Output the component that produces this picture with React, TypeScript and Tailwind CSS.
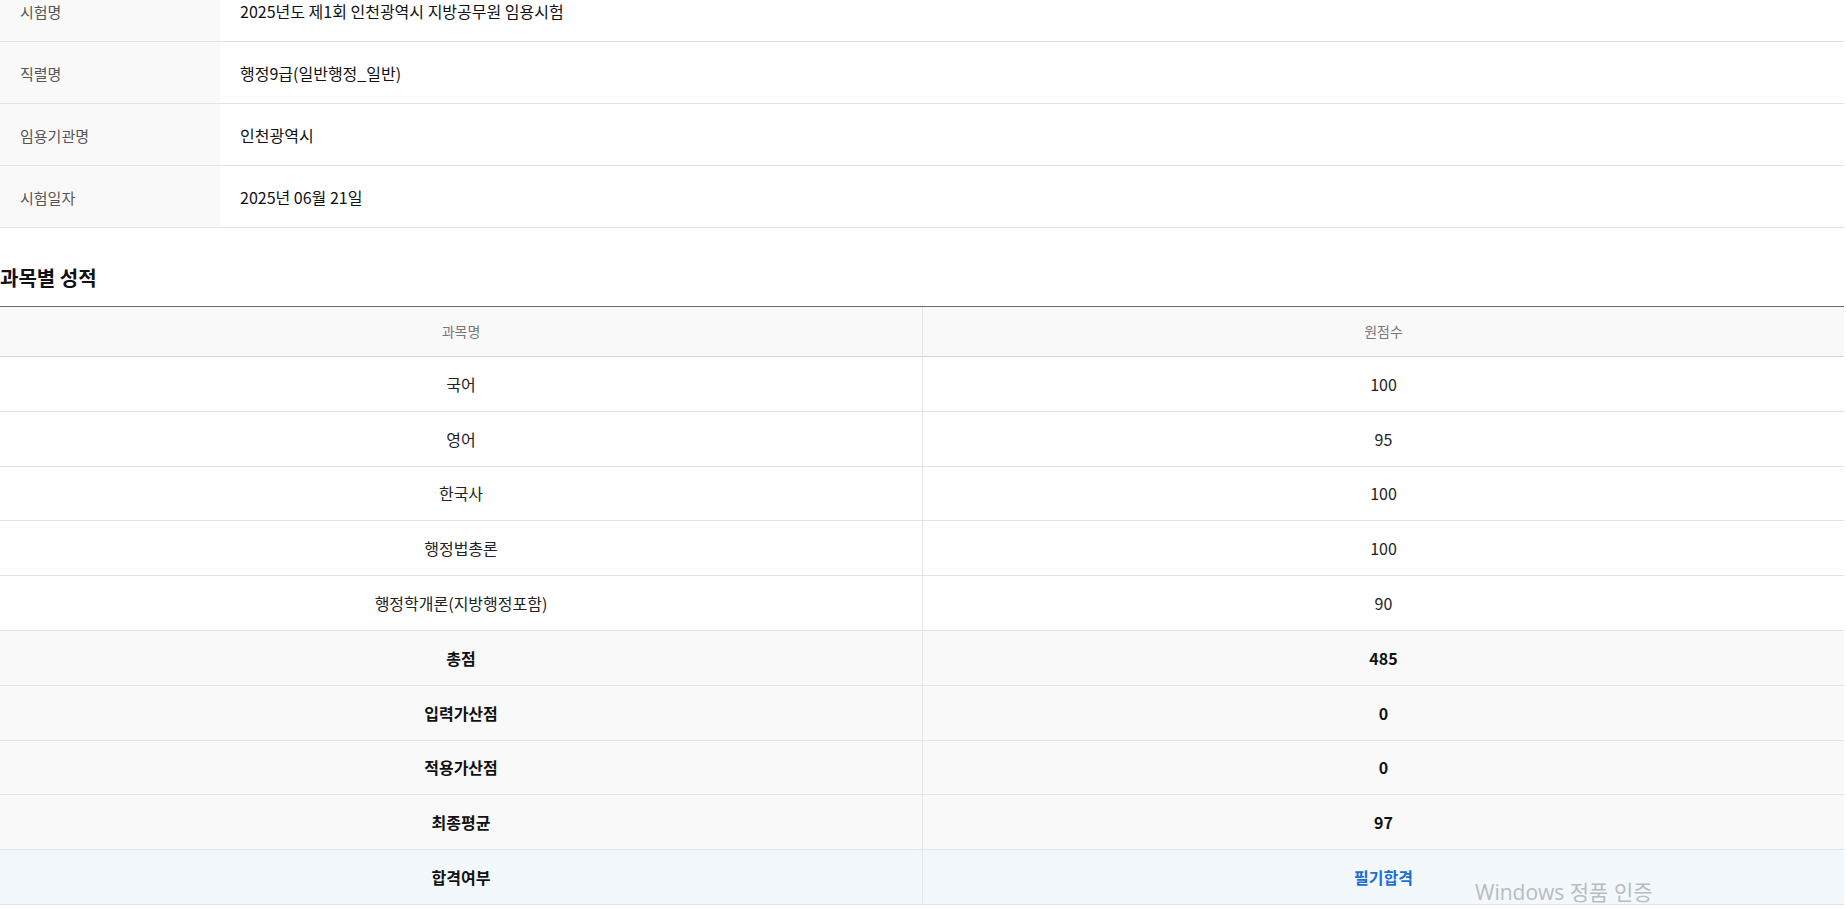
const info = [
  { label: "시험명", value: "2025년도 제1회 인천광역시 지방공무원 임용시험" },
  { label: "직렬명", value: "행정9급(일반행정_일반)" },
  { label: "임용기관명", value: "인천광역시" },
  { label: "시험일자", value: "2025년 06월 21일" },
];

const subjects = [
  { name: "국어", score: "100" },
  { name: "영어", score: "95" },
  { name: "한국사", score: "100" },
  { name: "행정법총론", score: "100" },
  { name: "행정학개론(지방행정포함)", score: "90" },
];

const totals = [
  { name: "총점", score: "485" },
  { name: "입력가산점", score: "0" },
  { name: "적용가산점", score: "0" },
  { name: "최종평균", score: "97" },
];

export default function App() {
  return (
    <div className="relative h-[908px] w-[1847px] overflow-hidden bg-white font-['Noto_Sans_CJK_KR',sans-serif] text-[#222]">
      <div className="-mt-[20px] w-[1844px]">
        {/* 시험 정보 */}
        <div>
          {info.map((row) => (
            <div key={row.label} className="flex h-[62px] border-b border-[#e3e3e3]">
              <div className="flex w-[220px] items-center bg-[#f9f9f9] pl-[20px] pt-[3px] text-[15px] text-[#555]">
                {row.label}
              </div>
              <div className="flex flex-1 items-center pl-[20px] text-[16px] text-[#111]">
                {row.value}
              </div>
            </div>
          ))}
        </div>

        {/* 과목별 성적 */}
        <h2 className="mt-[36px] h-[28px] text-[20px] font-bold leading-[28px] text-[#111]">과목별 성적</h2>

        <div className="mt-[14px] border-t border-[#6b6b6b]">
          <div className="grid h-[50px] grid-cols-[923px_1fr] border-b border-[#d6d6d6] bg-[#f9f9f9] text-[14px] text-[#777]">
            <div className="flex items-center justify-center border-r border-[#e5e5e5]">과목명</div>
            <div className="flex items-center justify-center">원점수</div>
          </div>

          {subjects.map((s) => (
            <div key={s.name} className="grid h-[54.8px] grid-cols-[923px_1fr] border-b border-[#e3e3e3] text-[16px] text-[#222]">
              <div className="flex items-center justify-center border-r border-[#e5e5e5]">{s.name}</div>
              <div className="flex items-center justify-center">{s.score}</div>
            </div>
          ))}

          {totals.map((s) => (
            <div key={s.name} className="grid h-[54.8px] grid-cols-[923px_1fr] border-b border-[#e3e3e3] bg-[#f9f9f9] text-[16px] font-bold text-[#111]">
              <div className="flex items-center justify-center border-r border-[#e5e5e5]">{s.name}</div>
              <div className="flex items-center justify-center">{s.score}</div>
            </div>
          ))}

          <div className="grid h-[54.8px] grid-cols-[923px_1fr] border-b border-[#e3e3e3] bg-[#f2f8fc] text-[16px] font-bold">
            <div className="flex items-center justify-center border-r border-[#e5e5e5] text-[#111]">합격여부</div>
            <div className="flex items-center justify-center text-[#1a6fd4]">필기합격</div>
          </div>
        </div>
      </div>

      <div className="absolute left-[1475px] top-[878px] font-['Open_Sans','Noto_Sans_CJK_KR',sans-serif] text-[21px] leading-[28px] text-[#bcbcbc]">
        Windows 정품 인증
      </div>
    </div>
  );
}
